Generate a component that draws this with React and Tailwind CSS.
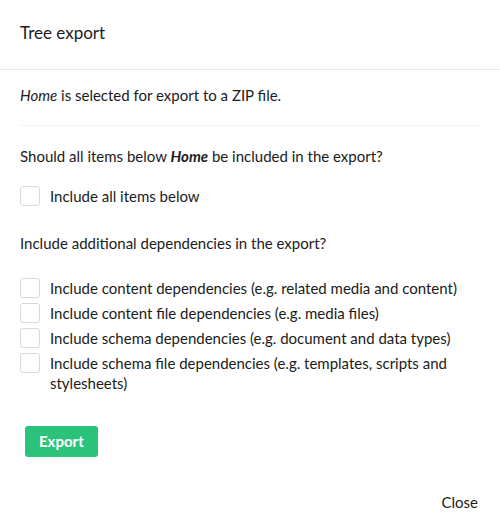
import React from 'react'

const Checkbox = ({ label }) => (
  <label className="flex items-start gap-[10px] cursor-pointer">
    <span className="w-5 h-5 shrink-0 rounded-[3px] border border-[#d8d7d9] bg-white" />
    <span className="leading-5">{label}</span>
  </label>
)

export default function App() {
  return (
    <div
      className="w-[500px] h-[527px] bg-white text-[#1b1b1b] text-[15px] flex flex-col"
      style={{ fontFamily: 'Lato, "Open Sans", sans-serif' }}
    >
      <div className="h-[70px] px-5 pb-1 flex items-center border-b border-[#e9e9eb]">
        <h1 className="text-[17px] leading-6">Tree export</h1>
      </div>

      <div className="px-5 pt-[15px]">
        <p className="leading-5">
          <em>Home</em> is selected for export to a ZIP file.
        </p>
        <hr className="mt-5 border-t border-[#f3f3f5]" />

        <p className="mt-5 leading-5">
          Should all items below <strong className="italic font-bold">Home</strong> be included in the export?
        </p>
        <div className="mt-5">
          <Checkbox label="Include all items below" />
        </div>

        <p className="mt-[27px] leading-5">Include additional dependencies in the export?</p>
        <div className="mt-[25px] flex flex-col gap-[5px]">
          <Checkbox label="Include content dependencies (e.g. related media and content)" />
          <Checkbox label="Include content file dependencies (e.g. media files)" />
          <Checkbox label="Include schema dependencies (e.g. document and data types)" />
          <Checkbox label="Include schema file dependencies (e.g. templates, scripts and stylesheets)" />
        </div>

        <button className="mt-[33px] ml-[5px] h-[31px] px-[14px] rounded-[3px] bg-[#2bc37c] text-white font-bold text-[15px]">
          Export
        </button>
      </div>

      <div className="mt-auto px-[22px] pb-[15px] flex justify-end">
        <button className="leading-5">Close</button>
      </div>
    </div>
  )
}
